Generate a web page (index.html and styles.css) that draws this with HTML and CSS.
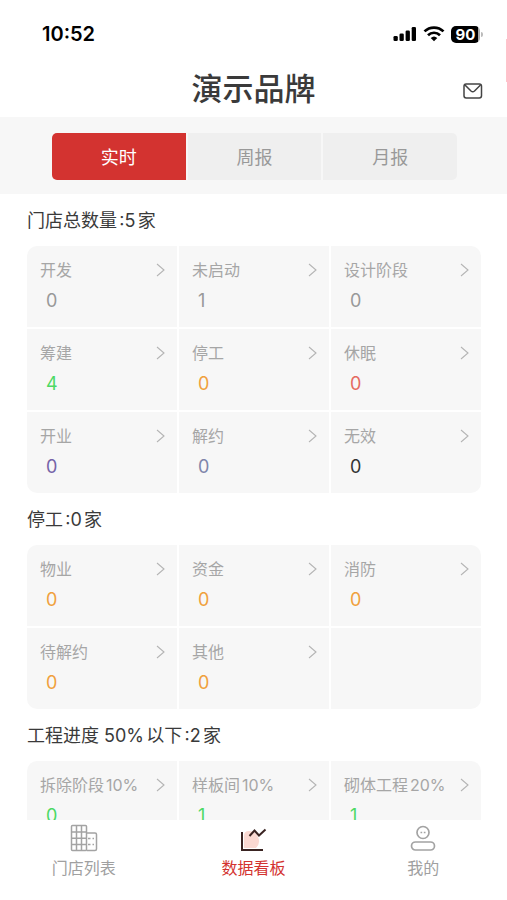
FILE: index.html
```html
<!DOCTYPE html>
<html lang="zh-CN">
<head>
<meta charset="utf-8">
<meta name="viewport" content="width=device-width, initial-scale=1">
<title>演示品牌</title>
<link rel="stylesheet" href="styles.css">
</head>
<body>
<svg class="defs" aria-hidden="true">
  <symbol id="chevron" viewBox="0 0 10 16"><path d="M1 2l7 6-7 6" fill="none" stroke="currentColor" stroke-width="1.1"/></symbol>
</svg>
<div class="status">
  <span class="clock">10:52</span>
  <div class="signals">
    <svg width="24" height="16" viewBox="0 0 24 16" aria-hidden="true">
      <rect x="0.500" y="10" width="4.300" height="5" rx="1.300"/><rect x="6.500" y="7.500" width="4.300" height="7.500" rx="1.300"/><rect x="12.600" y="4.500" width="4.300" height="10.500" rx="1.300"/><rect x="18.700" y="1" width="4.300" height="14" rx="1.300"/>
    </svg>
    <svg width="22" height="16" viewBox="0 0 22 16" aria-hidden="true">
      <g fill="none" stroke="#000" stroke-width="2.700"><path d="M1.500 5.400a13.600 13.600 0 0 1 19 0"/><path d="M5 9.200a8.600 8.600 0 0 1 12 0"/></g>
      <path d="M11 15.200l-3.300-3.300a4.900 4.900 0 0 1 6.600 0z"/>
    </svg>
    <span class="battery">90</span>
  </div>
</div>
<header class="header">
  <h1>演示品牌</h1>
  <button class="mail" type="button" aria-label="消息">
    <svg width="20" height="18" viewBox="0 0 20 18" aria-hidden="true"><g fill="none" stroke="#444" stroke-width="1.500" stroke-linejoin="round"><rect x="1" y="2" width="17.500" height="14" rx="2.200"/><path d="M2 3l6 6q1.750 1.400 3.500 0l6-6"/></g></svg>
  </button>
</header>
<div class="band">
  <div class="tabs">
    <button class="tab active" type="button">实时</button>
    <button class="tab" type="button">周报</button>
    <button class="tab" type="button">月报</button>
  </div>
</div>
<main class="content">
  <section>
    <h2>门店总数量:5家</h2>
    <div class="grid">
      <a class="cell" href="#"><span class="label">开发</span><svg class="chev"><use href="#chevron"/></svg><span class="num">0</span></a>
      <a class="cell" href="#"><span class="label">未启动</span><svg class="chev"><use href="#chevron"/></svg><span class="num">1</span></a>
      <a class="cell" href="#"><span class="label">设计阶段</span><svg class="chev"><use href="#chevron"/></svg><span class="num">0</span></a>
      <a class="cell" href="#"><span class="label">筹建</span><svg class="chev"><use href="#chevron"/></svg><span class="num green">4</span></a>
      <a class="cell" href="#"><span class="label">停工</span><svg class="chev"><use href="#chevron"/></svg><span class="num orange">0</span></a>
      <a class="cell" href="#"><span class="label">休眠</span><svg class="chev"><use href="#chevron"/></svg><span class="num red">0</span></a>
      <a class="cell" href="#"><span class="label">开业</span><svg class="chev"><use href="#chevron"/></svg><span class="num purple">0</span></a>
      <a class="cell" href="#"><span class="label">解约</span><svg class="chev"><use href="#chevron"/></svg><span class="num slate">0</span></a>
      <a class="cell" href="#"><span class="label">无效</span><svg class="chev"><use href="#chevron"/></svg><span class="num dark">0</span></a>
    </div>
  </section>
  <section>
    <h2>停工:0家</h2>
    <div class="grid">
      <a class="cell" href="#"><span class="label">物业</span><svg class="chev"><use href="#chevron"/></svg><span class="num orange">0</span></a>
      <a class="cell" href="#"><span class="label">资金</span><svg class="chev"><use href="#chevron"/></svg><span class="num orange">0</span></a>
      <a class="cell" href="#"><span class="label">消防</span><svg class="chev"><use href="#chevron"/></svg><span class="num orange">0</span></a>
      <a class="cell" href="#"><span class="label">待解约</span><svg class="chev"><use href="#chevron"/></svg><span class="num orange">0</span></a>
      <a class="cell" href="#"><span class="label">其他</span><svg class="chev"><use href="#chevron"/></svg><span class="num orange">0</span></a>
      <div class="cell"></div>
    </div>
  </section>
  <section>
    <h2>工程进度 50%以下:2家</h2>
    <div class="grid">
      <a class="cell" href="#"><span class="label">拆除阶段10%</span><svg class="chev"><use href="#chevron"/></svg><span class="num green">0</span></a>
      <a class="cell" href="#"><span class="label">样板间10%</span><svg class="chev"><use href="#chevron"/></svg><span class="num green">1</span></a>
      <a class="cell" href="#"><span class="label">砌体工程20%</span><svg class="chev"><use href="#chevron"/></svg><span class="num green">1</span></a>
    </div>
  </section>
</main>
<nav class="nav">
  <a href="#">
    <svg width="28" height="28" viewBox="0 0 28 28" aria-hidden="true"><g fill="none" stroke="#a3a3a3" stroke-width="1.500"><rect x="1.500" y="1.500" width="15" height="25" rx="1"/><path d="M16.500 9h8.500q1.500 0 1.500 1.500v14.500q0 1.500-1.500 1.500h-8.500M6.500 1.500v25M11.500 1.500v25M1.500 8h15M1.500 14.200h15M1.500 20.400h15"/><path d="M18 14.500h2.500M18 20.500h2.500M22.500 14.500h1.500M22.500 20.500h1.500"/></g></svg>
    <span>门店列表</span>
  </a>
  <a class="current" href="#">
    <svg width="28" height="28" viewBox="0 0 28 28" aria-hidden="true"><path d="M5 12q0-5 5-5 7 0 9 6 3 6-2 11H5z" fill="#fbd9d2"/><g fill="none" stroke="#3a2422" stroke-width="2"><path d="M3 8v18h21"/><path d="M10.500 12l5-5.500 4.500 5 6.500-6"/></g></svg>
    <span>数据看板</span>
  </a>
  <a href="#">
    <svg width="28" height="28" viewBox="0 0 28 28" aria-hidden="true"><g fill="none" stroke="#a3a3a3" stroke-width="1.700"><circle cx="14" cy="8.500" r="6"/><rect x="2.500" y="18" width="23" height="8" rx="4"/></g><path d="M11.500 8.500h1.700M14.800 8.500h1.700" stroke="#a3a3a3" stroke-width="1.300"/></svg>
    <span>我的</span>
  </a>
</nav>
<div class="edge" aria-hidden="true"></div>
</body>
</html>
```

FILE: styles.css
```css
* { box-sizing: border-box; }

body {
  margin: 0;
  height: 100vh;
  display: flex;
  flex-direction: column;
  position: relative;
  background: #fff;
  color: #3a3a3a;
  font-family: Inter, "Noto Sans CJK SC", sans-serif;
  text-autospace: normal;
}

a { color: inherit; text-decoration: none; }
button { border: 0; padding: 0; font: inherit; cursor: pointer; }
.defs { display: none; }

.status {
  flex: none;
  height: 60px;
  padding: 8px 27px 0 42px;
  display: flex;
  align-items: center;
  justify-content: space-between;
  color: #000;
}
.clock { font-size: 20px; font-weight: 600; }
.signals { display: flex; align-items: center; gap: 6px; }
.signals svg { display: block; }
.battery {
  position: relative;
  width: 29px;
  height: 17px;
  border-radius: 5px;
  background: linear-gradient(90deg, #000 92%, #aaa 92%);
  color: #fff;
  font-size: 15px;
  font-weight: 700;
  line-height: 17px;
  text-align: center;
}
.battery::after {
  content: "";
  position: absolute;
  top: 6px;
  right: -3px;
  width: 2px;
  height: 5px;
  border-radius: 0 2px 2px 0;
  background: #bbb;
}

.header {
  flex: none;
  height: 57px;
  padding: 0 24px;
  display: grid;
  grid-template-columns: 20px 1fr 20px;
  align-items: center;
}
.header h1 {
  grid-column: 2;
  margin: 0;
  font-size: 31px;
  font-weight: 500;
  line-height: 56px;
  text-align: center;
}
.mail { background: none; height: 18px; margin-top: 4px; }
.mail svg { display: block; }

.band { flex: none; padding: 16px 50px 14px 52px; background: #f7f7f7; }
.tabs {
  display: grid;
  grid-template-columns: repeat(3, 1fr);
  gap: 2px;
  border-radius: 5px;
  overflow: hidden;
}
.tab {
  height: 47px;
  padding-bottom: 2px;
  background: #efefef;
  color: #999;
  font-size: 18px;
}
.tab.active { background: #d33330; color: #fff; }

.content {
  flex: 1;
  min-height: 0;
  padding: 0 26px 0 27px;
  overflow-y: auto;
  scrollbar-width: none;
}
.content h2 {
  margin: 0;
  height: 52px;
  font-size: 18px;
  font-weight: 400;
  line-height: 54px;
}
.grid {
  display: grid;
  grid-template-columns: repeat(3, 1fr);
  grid-auto-rows: 81px;
  gap: 2px;
  border-radius: 10px;
  overflow: hidden;
}
.cell {
  padding: 12px 11px 0 13px;
  display: grid;
  grid-template-columns: 1fr 10px;
  grid-template-rows: 24px 36px;
  align-items: center;
  background: #f7f7f7;
}
.label { font-size: 16px; line-height: 24px; color: #a6a6a6; white-space: nowrap; }
.chev { width: 10px; height: 16px; color: #b5b5b5; }
.num { padding-left: 6px; font-size: 18px; color: #999; }
.green { color: #4cd964; }
.orange { color: #f0a03c; }
.red { color: #e56a5f; }
.purple { color: #7663a8; }
.slate { color: #8085aa; }
.dark { color: #333; }

.nav {
  flex: none;
  height: 80px;
  padding-top: 4px;
  display: grid;
  grid-template-columns: 1fr 1fr 1fr;
  gap: 2px;
  background: #fff;
  color: #a0a0a0;
  font-size: 16px;
  line-height: 24px;
}
.nav a { display: flex; flex-direction: column; align-items: center; gap: 4px; }
.nav svg { display: block; }
.nav .current { color: #d33330; }

.edge { position: absolute; top: 39px; right: 0; width: 1px; height: 43px; background: #ffc4cb; }
```
